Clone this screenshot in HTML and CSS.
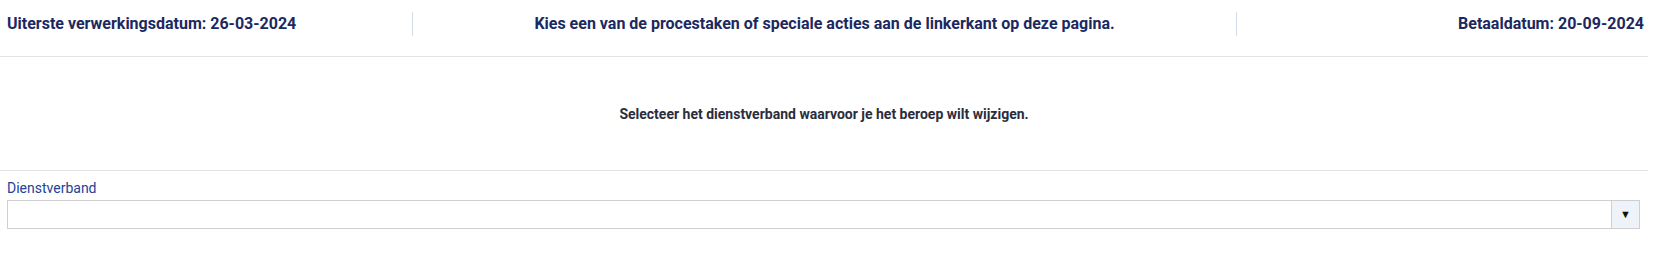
FILE: index.html
```html
<!DOCTYPE html>
<html lang="nl">
<head>
  <meta charset="UTF-8" />
  <meta name="viewport" content="width=device-width, initial-scale=1.0"/>
  <title>Beroep wijzigen</title>
  <link rel="stylesheet" href="styles.css">
</head>
<body>

  <div class="pagina">
    <div class="kop">
      <div class="kop-links">Uiterste verwerkingsdatum: 26-03-2024</div>
      <div class="kop-midden">Kies een van de procestaken of speciale acties aan de linkerkant op deze pagina.</div>
      <div class="kop-rechts">Betaaldatum: 20-09-2024</div>
    </div>

    <div class="melding">Selecteer het dienstverband waarvoor je het beroep wilt wijzigen.</div>

    <div class="veld">
      <label class="veld-label">Dienstverband</label>
      <div class="keuzelijst">
        <div class="keuzelijst-waarde"></div>
        <div class="keuzelijst-pijl">&#9660;</div>
      </div>
    </div>
  </div>

</body>
</html>
```

FILE: styles.css
```css
body, html {
  margin: 0;
  padding: 0;
  font-family: Roboto, "Liberation Sans", Arial, sans-serif;
  background: #fff;
}

.pagina {
  width: 1648px;
}

.kop {
  display: flex;
  padding: 12px 0 20px;
  border-bottom: 1px solid #e1e3e8;
  color: #1c2860;
  font-size: 16px;
  font-weight: bold;
  line-height: 24px;
}

.kop-links {
  width: 25%;
  padding-left: 7px;
  box-sizing: border-box;
}

.kop-midden {
  width: 50%;
  text-align: center;
  border-left: 1px solid #d3dcea;
  box-sizing: border-box;
}

.kop-rechts {
  width: 25%;
  text-align: right;
  padding-right: 4px;
  border-left: 1px solid #d3dcea;
  box-sizing: border-box;
}

.melding {
  padding: 49px 0 47px;
  border-bottom: 1px solid #e1e3e8;
  text-align: center;
  color: #2b2d3c;
  font-size: 14px;
  font-weight: bold;
  line-height: 17px;
}

.veld {
  padding: 9px 8px 0 7px;
}

.veld-label {
  display: block;
  color: #23429a;
  font-size: 14px;
  line-height: 16px;
  margin-bottom: 4px;
}

.keuzelijst {
  display: flex;
  height: 29px;
  border: 1px solid #cfcfcf;
  box-sizing: border-box;
}

.keuzelijst-waarde {
  flex: 1;
}

.keuzelijst-pijl {
  width: 27px;
  background: #eef3f9;
  border-left: 1px solid #cfcfcf;
  display: flex;
  align-items: center;
  justify-content: center;
  font-size: 11px;
  color: #111;
}
```
